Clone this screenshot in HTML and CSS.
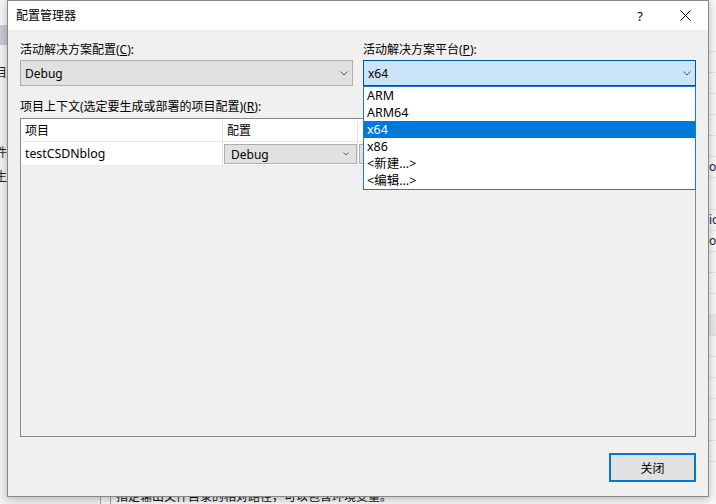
FILE: index.html
```html
<!DOCTYPE html>
<html lang="zh-CN">
<head>
<meta charset="utf-8">
<title>配置管理器</title>
<link rel="stylesheet" href="styles.css">
</head>
<body>
<div class="backdrop">
  <div class="b-left">
    <div class="b-top"></div>
    <div class="b-tab"></div>
    <div class="b-char b-c1">目</div>
    <div class="b-char b-c2">件</div>
    <div class="b-char b-c3">生</div>
  </div>
  <div class="b-main">
    <div class="b-text">指定输出文件目录的相对路径，可以包含环境变量。</div>
  </div>
  <div class="b-right">
    <div class="b-row"></div><div class="b-row"></div><div class="b-row"></div>
    <div class="b-row"></div><div class="b-row"></div><div class="b-row"></div>
    <div class="b-row b-o">o</div>
    <div class="b-row b-tall"></div>
    <div class="b-row b-o">io</div>
    <div class="b-row b-o">o</div>
    <div class="b-row"></div><div class="b-row"></div><div class="b-row"></div>
    <div class="b-row b-shade"></div><div class="b-row"></div><div class="b-row"></div>
    <div class="b-row"></div><div class="b-row"></div><div class="b-row"></div>
    <div class="b-row"></div>
  </div>
</div>

<div class="dialog">
  <div class="titlebar">
    <span class="title">配置管理器</span>
    <span class="tbtn help">?</span>
    <span class="tbtn close">
      <svg width="11" height="11" viewBox="0 0 11 11"><path d="M0.5 0.5 L10.5 10.5 M10.5 0.5 L0.5 10.5" stroke="#000" stroke-width="1" fill="none"/></svg>
    </span>
  </div>
  <div class="client">
    <div class="top">
      <div class="field">
        <div class="lbl">活动解决方案配置(<u>C</u>):</div>
        <div class="combo"><span>Debug</span>
          <svg class="chev" width="8" height="5" viewBox="0 0 8 5"><path d="M0.5 0.5 L4 4 L7.5 0.5" fill="none" stroke="#555" stroke-width="1"/></svg>
        </div>
      </div>
      <div class="field">
        <div class="lbl">活动解决方案平台(<u>P</u>):</div>
        <div class="combo focus"><span>x64</span>
          <svg class="chev" width="8" height="5" viewBox="0 0 8 5"><path d="M0.5 0.5 L4 4 L7.5 0.5" fill="none" stroke="#555" stroke-width="1"/></svg>
        </div>
        <ul class="droplist">
          <li>ARM</li>
          <li>ARM64</li>
          <li class="sel">x64</li>
          <li>x86</li>
          <li>&lt;新建...&gt;</li>
          <li>&lt;编辑...&gt;</li>
        </ul>
      </div>
    </div>
    <div class="lbl ctx">项目上下文(选定要生成或部署的项目配置)(<u>R</u>):</div>
    <div class="grid">
      <div class="row head">
        <div class="cell c1">项目</div>
        <div class="cell c2">配置</div>
        <div class="cell c3"></div>
        <div class="cell c4"></div>
        <div class="cell c5"></div>
      </div>
      <div class="row item">
        <div class="cell c1">testCSDNblog</div>
        <div class="cell c2"><div class="mini"><span>Debug</span>
          <svg width="6" height="4" viewBox="0 0 6 4"><path d="M0.5 0.5 L3 3 L5.5 0.5" fill="none" stroke="#666" stroke-width="1"/></svg></div></div>
        <div class="cell c3"><div class="mini"></div></div>
        <div class="cell c4"></div>
        <div class="cell c5"></div>
      </div>
    </div>
    <div class="foot">
      <button class="btn">关闭</button>
    </div>
  </div>
</div>
</body>
</html>
```

FILE: styles.css
```css
* { box-sizing: border-box; margin: 0; padding: 0; }
html, body { width: 716px; height: 504px; overflow: hidden; }
body {
  position: relative;
  background: #f5f5f5;
  font-family: "Noto Sans", "Noto Sans CJK SC", sans-serif;
  font-size: 12px;
  color: #000;
}

/* window behind the dialog */
.backdrop { display: flex; height: 504px; }
.b-left { width: 101px; border-right: 1px solid #a0a0a0; background: #f0f0f0; overflow: hidden; }
.b-top { height: 25px; background: #f3f3f3; }
.b-tab { height: 20px; background: #c5c9d3; }
.b-char { margin-left: -5px; line-height: 16px; height: 16px; color: #222; }
.b-c1 { margin-top: 20px; }
.b-c2 { margin-top: 64px; }
.b-c3 { margin-top: 8px; }
.b-main {
  flex: 1;
  margin-left: 9px;
  border-left: 1px solid #a0a0a0;
  display: flex;
  flex-direction: column;
  justify-content: flex-end;
  padding-left: 5px;
  background: #f5f5f5;
}
.b-text { line-height: 16px; height: 16px; margin-bottom: -1px; color: #111; }
.b-right { width: 8px; background: #f7f7f7; overflow: hidden; padding-top: 31px; }
.b-row { height: 21px; border-bottom: 1px solid #e2e2e2; line-height: 20px; color: #1a1a3a; padding-left: 1px; }
.b-tall { height: 32px; }
.b-shade { background: #e8e8e8; }

/* dialog */
.dialog {
  position: absolute;
  left: 7px;
  top: 0;
  width: 702px;
  height: 497px;
  border: 1px solid #888;
  background: #f0f0f0;
  box-shadow: 0 2px 8px rgba(0, 0, 0, 0.25);
  display: flex;
  flex-direction: column;
}
.titlebar {
  height: 29px;
  background: #fff;
  display: flex;
  align-items: center;
}
.title { flex: 1; padding-left: 8px; line-height: 16px; }
.tbtn { width: 46px; height: 29px; display: flex; align-items: center; justify-content: center; }
.help { font-size: 13px; padding-left: 2px; }
.close svg { display: block; }

.client {
  flex: 1;
  background: #f0f0f0;
  padding: 12px 12px 0 12px;
  display: flex;
  flex-direction: column;
}
.top { display: grid; grid-template-columns: 1fr 1fr; column-gap: 10px; }
.field { position: relative; }
.lbl { line-height: 16px; height: 16px; }
u { text-decoration: underline; text-underline-offset: 1px; }
.combo {
  margin-top: 2px;
  height: 26px;
  border: 1px solid #adadad;
  background: #e1e1e1;
  display: flex;
  align-items: center;
  justify-content: space-between;
  padding: 0 4px 0 4px;
}
.combo.focus { background: #cce4f7; border-color: #005499; }
.chev { display: block; }

.droplist {
  position: absolute;
  top: 100%;
  left: 0;
  right: 0;
  list-style: none;
  background: #fff;
  border: 1px solid #1a7ad4;
  z-index: 5;
}
.droplist li { height: 17px; line-height: 17px; padding-left: 3px; font-size: 12.5px; }
.droplist li.sel { background: #0078d7; color: #fff; }

.ctx { margin-top: 13px; }
.grid {
  margin-top: 3px;
  height: 319px;
  border: 1px solid #828790;
  background: #f0f0f0;
  overflow: hidden;
}
.row { display: flex; }
.cell {
  background: #fff;
  border-right: 1px solid #e3e3e3;
  border-bottom: 1px solid #e8e8e8;
  padding-left: 4px;
  display: flex;
  align-items: center;
}
.head .cell { height: 23px; }
.item .cell { height: 24px; align-items: flex-start; }
.item .c1 { align-items: center; font-size: 12.3px; }
.c1 { width: 202px; }
.c2 { width: 135px; }
.c3 { width: 136px; }
.c4 { width: 60px; }
.c5 { width: 60px; }
.item .c2, .item .c3 { padding-left: 1px; }
.mini {
  margin-top: 2px;
  width: 133px;
  height: 20px;
  background: #e1e1e1;
  border: 1px solid #adadad;
  display: flex;
  align-items: center;
  justify-content: space-between;
  padding: 0 7px 0 6px;
}
.mini svg { display: block; }

.foot { display: flex; justify-content: flex-end; margin-top: 16px; }
.btn {
  width: 87px;
  height: 29px;
  border: 2px solid #0078d7;
  background: #e1e1e1;
  font-family: "Noto Sans", "Noto Sans CJK SC", sans-serif;
  font-size: 12px;
  color: #000;
}
```
